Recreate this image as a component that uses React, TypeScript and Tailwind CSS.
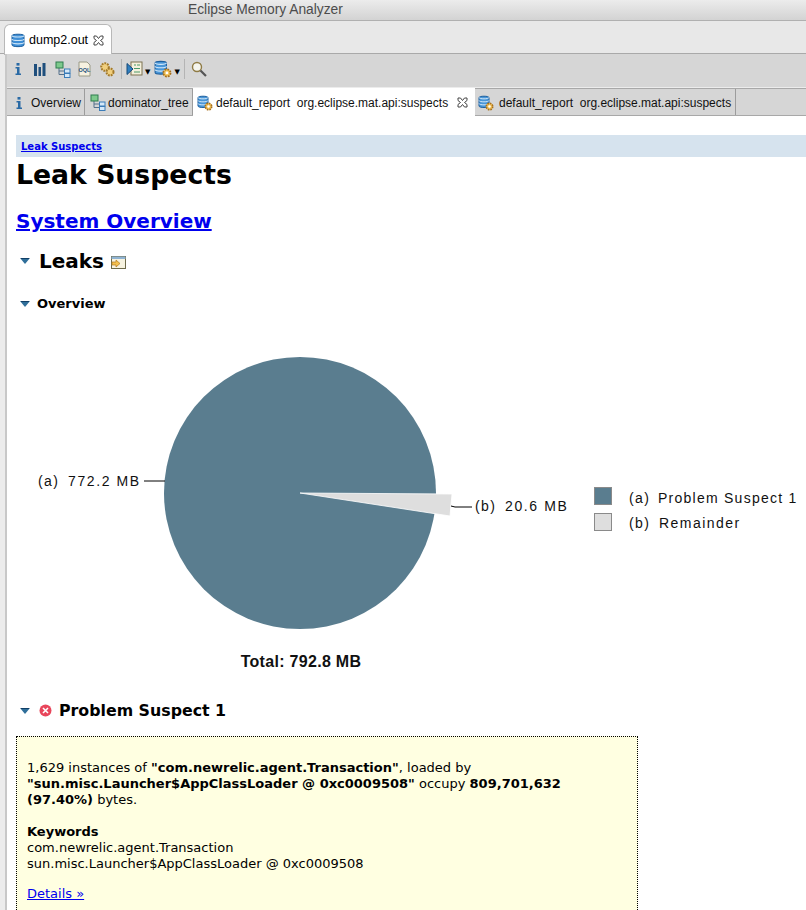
import React from "react";

const Db = ({ s = 16 }: { s?: number }) => (
  <svg width={s} height={s} viewBox="0 0 16 16" className="shrink-0">
    <path d="M2 3.5C2 1.8 14 1.8 14 3.5V13C14 15.2 2 15.2 2 13Z" fill="#3f8fd6" stroke="#1d5f9e" />
    <path d="M2 3.5C2 5.5 14 5.5 14 3.5M2 7C2 9 14 9 14 7M2 10.3C2 12.3 14 12.3 14 10.3" fill="none" stroke="#cfe6f8" strokeWidth="1.2" />
  </svg>
);
const DbGear = ({ s = 16 }: { s?: number }) => (
  <svg width={s} height={s} viewBox="0 0 16 16" className="shrink-0">
    <path d="M1 2.5C1 .8 11 .8 11 2.5V11C11 13 1 13 1 11Z" fill="#4a97d8" stroke="#1d5f9e" />
    <path d="M1 2.5C1 4.3 11 4.3 11 2.5M1 5.5C1 7.3 11 7.3 11 5.5M1 8.5C1 10.3 11 10.3 11 8.5" fill="none" stroke="#d5e9f9" />
    <circle cx="11.5" cy="11.5" r="3.2" fill="#f3c45b" stroke="#a8701c" strokeWidth="1.6" strokeDasharray="1.6 .9" />
    <circle cx="11.5" cy="11.5" r="1.2" fill="#fff" />
  </svg>
);
const Info = () => (
  <svg width="10" height="14" viewBox="0 0 10 14" className="shrink-0">
    <rect x="3.5" y="1" width="3" height="2.6" fill="#2a6aa5" />
    <path d="M2.5 5H6.5V11.5H8V13H2.5V11.5H4V6.5H2.5Z" fill="#2a6aa5" />
  </svg>
);
const Tree = () => (
  <svg width="16" height="17" viewBox="0 0 16 17" className="shrink-0">
    <path d="M4 7V13.5H9M4 10H9" fill="none" stroke="#54708c" />
    <rect x="1" y="1" width="7" height="6" fill="#7dc98c" stroke="#2f7d4f" />
    <rect x="9.5" y="8" width="5.5" height="4" fill="#d5e8f8" stroke="#3b7cb8" />
    <rect x="9.5" y="12.5" width="5.5" height="4" fill="#d5e8f8" stroke="#3b7cb8" />
  </svg>
);
const Close = () => (
  <svg width="11" height="11" viewBox="0 0 11 11" className="shrink-0">
    <path d="M1 1H3.5L5.5 3.5L7.5 1H10V3.5L7.5 5.5L10 7.5V10H7.5L5.5 7.5L3.5 10H1V7.5L3.5 5.5L1 3.5Z" fill="#fff" stroke="#444" strokeWidth="1" />
  </svg>
);
const Twist = () => (
  <svg width="10" height="6" viewBox="0 0 10 6" className="shrink-0">
    <path d="M0 0H10L5 6Z" fill="#2f6f9a" />
    <path d="M1 .5H9" stroke="#123f66" />
  </svg>
);
const Arrow = () => <span className="text-[7px] leading-none text-black">▼</span>;
const Sep = () => <div className="w-px h-[20px] bg-[#b4b4b4]" />;

export default function App() {
  const sans = { fontFamily: '"DejaVu Sans", Verdana, sans-serif' };
  const lib = { fontFamily: '"Liberation Sans", Arial, sans-serif' };
  return (
    <div className="w-[806px] h-[910px] overflow-hidden bg-[#ececec] flex flex-col relative" style={sans}>
      <div className="h-[21px] shrink-0 bg-gradient-to-b from-[#ececec] to-[#d3d3d3] border-b border-[#b0b0b0] pl-[188px] text-[13.8px] leading-[19px] text-[#4c4c4c]" style={lib}>
        Eclipse Memory Analyzer
      </div>
      <div className="h-[33px] shrink-0 pl-[4px] pt-[3px] bg-[#e8e8e8] border-b border-[#a9a9a9] flex items-stretch">
        <div className="w-[108px] h-[31px] bg-white rounded-t-[6px] border border-b-0 border-[#b8b8b8] flex items-center pl-[5px] gap-[3px] text-[12.5px] text-black" style={lib}>
          <Db />
          <span className="w-[61px]">dump2.out</span>
          <Close />
        </div>
      </div>
      <div className="flex-1 min-h-0 ml-[5px] border-l-2 border-[#c8c8c8] flex flex-col bg-[#ececec]">
        <div className="h-[33px] shrink-0 bg-[#d6d6d6] flex items-center pl-[6px] pb-[3px]">
          <Info />
          <svg width="13" height="13" viewBox="0 0 13 13" className="ml-[10px]"><path d="M1 1H4V13H1ZM5.5 4H8V13H5.5ZM9.5 0H12.5V13H9.5Z" fill="#1f4f7d" /></svg>
          <span className="ml-[9px]"><Tree /></span>
          <svg width="15" height="16" viewBox="0 0 15 16" className="ml-[6px]"><path d="M2 1H10L13 4V15H2Z" fill="#f6f1e0" stroke="#9a9a86" /><text x="7.5" y="11" fontSize="5.5" textAnchor="middle" fontWeight="700" fill="#24527e" style={lib}>OQL</text></svg>
          <svg width="16" height="16" viewBox="0 0 16 16" className="ml-[7px]"><circle cx="6" cy="6" r="3.8" fill="#f0cf7e" stroke="#a47a2a" strokeWidth="2" strokeDasharray="1.8 1" /><circle cx="11" cy="11" r="3.5" fill="#f0cf7e" stroke="#a47a2a" strokeWidth="2" strokeDasharray="1.8 1" /></svg>
          <span className="ml-[6px]"><Sep /></span>
          <svg width="17" height="16" viewBox="0 0 17 16" className="ml-[4px]"><rect x="5" y="1" width="11" height="13" fill="#f4f0dc" stroke="#7d7350" /><path d="M8 4H10M8 7.5H14M8 11H14M11 4H14" stroke="#4d9a6b" /><path d="M1 2.5L7 8L1 13.5Z" fill="#2f7fc0" stroke="#174a79" /></svg>
          <span className="ml-[2px]"><Arrow /></span>
          <span className="ml-[4px]"><DbGear s={18} /></span>
          <span className="ml-[2px]"><Arrow /></span>
          <span className="ml-[4px]"><Sep /></span>
          <svg width="16" height="16" viewBox="0 0 16 16" className="ml-[6px]"><circle cx="6" cy="6" r="4.5" fill="#f5f5ee" stroke="#8f7b45" strokeWidth="1.4" /><path d="M9.5 9.5L15 15" stroke="#555" strokeWidth="2.2" /></svg>
        </div>
        <div className="h-[28px] shrink-0 mt-px bg-[#d6d6d6] border-t border-b border-[#a8a8a8] flex items-stretch text-[12px] text-[#111]" style={lib}>
          <div className="w-[78px] border-r border-[#9c9c9c] flex items-center pt-px pl-[7px] gap-[7px]"><Info /><span>Overview</span></div>
          <div className="w-[108px] border-r border-[#9c9c9c] flex items-center pt-px pl-[5px] gap-[2px]"><Tree /><span>dominator_tree</span></div>
          <div className="w-[282px] -mt-px h-[28px] bg-white flex items-center pt-px pl-[4px] gap-[3px] whitespace-pre"><DbGear /><span className="w-[238px]">default_report  org.eclipse.mat.api:suspects</span><Close /></div>
          <div className="w-[261px] border-r border-[#9c9c9c] flex items-center pt-px pl-[3px] gap-[5px] whitespace-pre"><DbGear /><span>default_report  org.eclipse.mat.api:suspects</span></div>
        </div>
        <div className="flex-1 min-h-0 bg-white pl-[9px] overflow-hidden text-black">
          <div className="mt-[19px] h-[22px] bg-[#d6e3ee] pl-[5px] text-[10px] leading-[23px] font-bold text-[#0000ee] underline">Leak Suspects</div>
          <h1 className="text-[26.7px] leading-[34px] font-bold mt-px">Leak Suspects</h1>
          <div className="mt-[15px] text-[20px] leading-[28px] font-bold text-[#0000ee] underline">System Overview</div>
          <div className="mt-[12px] h-[28px] flex items-center pl-[4px]">
            <Twist />
            <span className="ml-[9px] text-[20px] font-bold">Leaks</span>
            <svg width="15" height="13" viewBox="0 0 15 13" className="ml-[7px] mt-[3px]"><rect x=".5" y=".5" width="14" height="12" fill="#f7f3e0" stroke="#6e6a4a" /><rect x=".5" y=".5" width="14" height="2.5" fill="#8fb3d3" /><path d="M1 6H5V4L9 7.5L5 11V9H1Z" fill="#f4c04e" stroke="#b27a1c" strokeWidth=".7" /></svg>
          </div>
          <div className="mt-[19px] h-[20px] flex items-center pl-[4px]">
            <Twist />
            <span className="ml-[7px] text-[13px] font-bold">Overview</span>
          </div>
          <svg width="790" height="387" viewBox="16 314 790 387" className="block" style={lib}>
            <circle cx="300" cy="493" r="136" fill="#5a7d8f" />
            <path d="M300 493 L452 494 L450 516 Z" fill="#dedede" stroke="#fff" strokeWidth=".8" />
            <path d="M144 481H165M451 506L455 507H472" stroke="#000" fill="none" />
            <g fontSize="14" letterSpacing="1.35" fill="#111">
              <text x="38" y="486">(a)<tspan x="68" letterSpacing="1.6">772.2 MB</tspan></text>
              <text x="475" y="511">(b)<tspan x="505" letterSpacing="1.6">20.6 MB</tspan></text>
              <text x="629" y="503">(a)<tspan x="658" letterSpacing="1.25">Problem Suspect 1</tspan></text>
              <text x="629" y="528">(b)<tspan x="659" letterSpacing="1.45">Remainder</tspan></text>
            </g>
            <rect x="594.5" y="487.5" width="17" height="17" fill="#5a7d8f" stroke="#8a8a8a" />
            <rect x="594.5" y="513.5" width="17" height="17" fill="#dedede" stroke="#8a8a8a" />
            <text x="301" y="667" textAnchor="middle" fontSize="16" letterSpacing="0.3" fontWeight="700" fill="#111">Total: 792.8 MB</text>
          </svg>
          <div className="h-[20px] flex items-center pl-[4px] -mt-px pt-px">
            <Twist />
            <svg width="13" height="13" viewBox="0 0 13 13" className="ml-[9px]"><circle cx="6.5" cy="6.5" r="6" fill="#e8465b" /><path d="M4 4L9 9M9 4L4 9" stroke="#fff" strokeWidth="1.6" /></svg>
            <span className="ml-[7px] text-[15.8px] font-bold">Problem Suspect 1</span>
          </div>
          <div className="mt-[16px] w-[622px] h-[200px] bg-[#ffffe1] border border-dotted border-black pt-[23px] pl-[10px] pr-[8px] text-[13px] leading-[16px]">
            <p>1,629 instances of <b>"com.newrelic.agent.Transaction"</b>, loaded by <b>"sun.misc.Launcher$AppClassLoader @ 0xc0009508"</b> occupy <b>809,701,632 (97.40%)</b> bytes.</p>
            <p className="mt-[16px] font-bold">Keywords</p>
            <p>com.newrelic.agent.Transaction</p>
            <p>sun.misc.Launcher$AppClassLoader @ 0xc0009508</p>
            <p className="mt-[14px] text-[#0000ee] underline">Details »</p>
          </div>
        </div>
      </div>
    </div>
  );
}
